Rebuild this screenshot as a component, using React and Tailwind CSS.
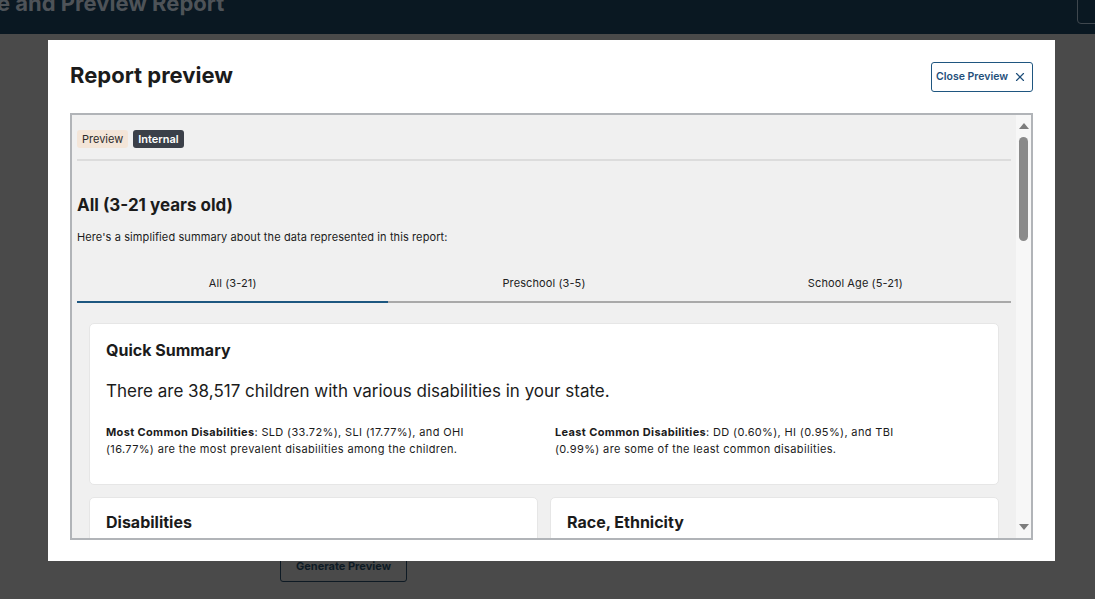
import React from 'react';
import { X } from 'lucide-react';

const font = { fontFamily: 'Inter, "Noto Sans", sans-serif' };

function Scrollbar() {
  return (
    <div className="w-[15px] shrink-0 bg-[#f7f7f7] flex flex-col items-center">
      <div className="h-[22px] flex items-center justify-center">
        <div className="w-0 h-0 border-l-[5px] border-r-[5px] border-b-[6px] border-l-transparent border-r-transparent border-b-[#7d7d7d]" />
      </div>
      <div className="w-[9px] h-[104px] rounded-full bg-[#8a8a8a]" />
      <div className="flex-1" />
      <div className="h-[22px] flex items-center justify-center">
        <div className="w-0 h-0 border-l-[5px] border-r-[5px] border-t-[6px] border-l-transparent border-r-transparent border-t-[#7d7d7d]" />
      </div>
    </div>
  );
}

function Tabs() {
  const tabs = ['All (3-21)', 'Preschool (3-5)', 'School Age (5-21)'];
  return (
    <div className="grid grid-cols-3 mt-[31px]">
      {tabs.map((t, i) => (
        <div key={t} className={`text-center text-[11px] tracking-[0.1px] text-[#222] pb-[9px] border-b-2 ${i === 0 ? 'border-[#1d5780]' : 'border-[#a9a9a9]'}`}>
          {t}
        </div>
      ))}
    </div>
  );
}

function ReportBody() {
  return (
    <div className="flex-1 min-w-0 bg-[#f0f0f0] px-[5px] pt-[15px] overflow-hidden">
      <div className="flex gap-[5px]">
        <span className="h-[18px] px-[5px] flex items-center rounded-[3px] bg-[#f3e5d8] text-[11px] text-[#2b2b2b]">Preview</span>
        <span className="h-[18px] px-[5px] flex items-center rounded-[3px] bg-[#3b4049] text-[11px] font-semibold text-white">Internal</span>
      </div>
      <div className="mt-[11px] h-[2px] bg-[#dcdcdc]" />

      <h2 className="mt-[33px] text-[17px] font-bold text-[#1b1b1b] leading-[22px]">All (3-21 years old)</h2>
      <p className="mt-[14px] text-[11px] tracking-[0.1px] text-[#1b1b1b] leading-[14px]">Here's a simplified summary about the data represented in this report:</p>

      <Tabs />

      <div className="px-3 pt-[20px] flex flex-col gap-3">
        <div className="bg-white rounded-[5px] border border-[#e6e6e6] px-4 pt-[16px] pb-[26px]">
          <h3 className="text-[16px] font-bold text-[#1b1b1b] leading-[20px]">Quick Summary</h3>
          <p className="mt-[21px] text-[17px] text-[#1b1b1b] leading-[20px]">There are 38,517 children with various disabilities in your state.</p>
          <div className="mt-[23px] grid grid-cols-2 gap-[22px] text-[11px] tracking-[0.35px] leading-[17px] text-[#1b1b1b]">
            <p className="max-w-[362px]"><b className="font-bold">Most Common Disabilities</b>: SLD (33.72%), SLI (17.77%), and OHI (16.77%) are the most prevalent disabilities among the children.</p>
            <p className="max-w-[362px]"><b className="font-bold">Least Common Disabilities</b>: DD (0.60%), HI (0.95%), and TBI (0.99%) are some of the least common disabilities.</p>
          </div>
        </div>
        <div className="grid grid-cols-2 gap-3">
          <div className="bg-white rounded-[5px] border border-[#e6e6e6] px-4 pt-[14px] h-[80px]">
            <h3 className="text-[16px] font-bold text-[#1b1b1b] leading-[20px]">Disabilities</h3>
          </div>
          <div className="bg-white rounded-[5px] border border-[#e6e6e6] px-4 pt-[14px] h-[80px]">
            <h3 className="text-[16px] font-bold text-[#1b1b1b] leading-[20px]">Race, Ethnicity</h3>
          </div>
        </div>
      </div>
    </div>
  );
}

export default function App() {
  return (
    <div className="relative w-[1095px] h-[599px] overflow-hidden bg-[#4a4a4a]" style={font}>
      {/* dimmed page behind the dialog */}
      <div className="h-[34px] bg-[#0a1822] flex justify-between overflow-hidden">
        <div className="-ml-[3px] -mt-[10px] text-[22px] font-bold text-[#4e5358] leading-[26px] whitespace-nowrap">e and Preview Report</div>
        <div className="mt-[-6px] mr-[-40px] w-[58px] h-[30px] rounded-[4px] border border-[#3f474e]" />
      </div>
      <div className="pl-[280px] pt-[516px]">
        <div className="w-[127px] h-[32px] rounded-[3px] border border-[#0e1a24] flex items-center justify-center text-[11px] font-bold text-[#0e1a24]">
          Generate Preview
        </div>
      </div>

      {/* dialog */}
      <div className="absolute left-[48px] top-[40px] w-[1007px] h-[521px] bg-white px-[22px] pt-[22px] flex flex-col">
        <div className="flex items-center justify-between h-[30px]">
          <h1 className="-mt-[4px] text-[22px] font-bold text-[#1b1b1b]">Report preview</h1>
          <button className="h-[30px] w-[102px] rounded-[3px] border border-[#1f5680] flex items-center justify-between pl-[4px] pr-[5px] text-[10.5px] font-semibold text-[#1f4f7a]">
            Close Preview
            <X className="w-[14px] h-[14px]" strokeWidth={2} />
          </button>
        </div>
        <div className="mt-[21px] h-[427px] border-2 border-[#b1b4b8] flex overflow-hidden">
          <ReportBody />
          <Scrollbar />
        </div>
      </div>
    </div>
  );
}
